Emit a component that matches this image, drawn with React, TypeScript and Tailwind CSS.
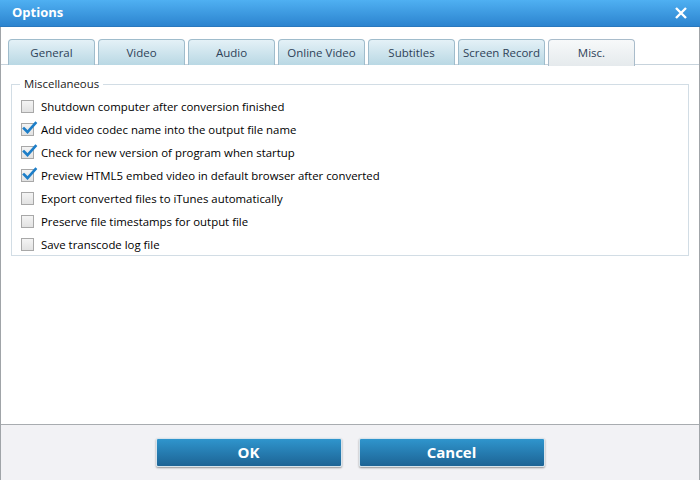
import React from "react";

const tabs = ["General", "Video", "Audio", "Online Video", "Subtitles", "Screen Record", "Misc."];
const items: [string, boolean][] = [
  ["Shutdown computer after conversion finished", false],
  ["Add video codec name into the output file name", true],
  ["Check for new version of program when startup", true],
  ["Preview HTML5 embed video in default browser after converted", true],
  ["Export converted files to iTunes automatically", false],
  ["Preserve file timestamps for output file", false],
  ["Save transcode log file", false],
];

function Box({ checked }: { checked: boolean }) {
  return (
    <div className="relative w-[13px] h-[13px] border border-[#a8a8a8] bg-gradient-to-b from-[#f4f4f4] to-[#e2e2e2] shrink-0">
      {checked && (
        <svg className="absolute left-[0px] top-[-3px]" width="16" height="14" viewBox="0 0 16 14">
          <path d="M2 7.5 L5.5 11 L13.5 2" fill="none" stroke="#1d7ec8" strokeWidth="2.6" strokeLinecap="square" />
        </svg>
      )}
    </div>
  );
}

export default function App() {
  return (
    <div className="w-[700px] h-[480px] flex flex-col bg-white overflow-hidden" style={{ fontFamily: '"Open Sans", "Noto Sans", sans-serif' }}>
      <div className="h-[27px] shrink-0 bg-gradient-to-b from-[#4fb0f2] to-[#2c84cf] flex items-center justify-between pl-[12px] pr-[12px] border-b border-[#2a78bd]">
        <span className="text-white font-bold text-[13px]">Options</span>
        <svg width="14" height="14" viewBox="0 0 14 14">
          <path d="M2 2 L12 12 M12 2 L2 12" stroke="white" strokeWidth="2.4" />
        </svg>
      </div>
      <div className="flex-1 flex flex-col border-x border-[#a0a4a8]">
        <div className="flex gap-[3px] pl-[7px] pt-[12px] border-b border-[#c7d3dc] h-[38px]">
          {tabs.map((t, i) => (
            <div
              key={t}
              className={
                "w-[87px] h-[26px] rounded-t-[4px] border border-b-0 flex items-center justify-center text-[11.5px] " +
                (i === 6
                  ? "border-[#a9bccb] bg-gradient-to-b from-[#f7f9fa] to-[#e5eaed] text-[#2e4258] h-[27px]"
                  : "border-[#9fbccc] bg-gradient-to-b from-[#e4f1f7] to-[#b9d8e4] text-[#2e4258]")
              }
            >
              {t}
            </div>
          ))}
        </div>
        <div className="relative mx-[10px] mt-[19px] border border-[#d2dde5] h-[172px] pt-[10px] pl-[9px]">
          <div className="absolute left-[8px] top-[-9px] bg-white px-[4px] text-[11.4px] text-[#1a1a1a] leading-[16px]">Miscellaneous</div>
          <div className="flex flex-col">
            {items.map(([t, c]) => (
              <div key={t} className="h-[23px] flex items-center gap-[7px] text-[11.4px] text-black">
                <Box checked={c} />
                <span>{t}</span>
              </div>
            ))}
          </div>
        </div>
        <div className="flex-1" />
        <div className="h-[56px] bg-[#f2f2f5] border-t border-[#a8acb0] flex items-center justify-center gap-[17px]">
          {["OK", "Cancel"].map((b) => (
            <div key={b} className="w-[186px] h-[29px] rounded-[2px] bg-gradient-to-b from-[#2f95cd] to-[#1d6495] shadow-[0_1px_2px_rgba(0,0,0,0.4)] border border-[#d8e4ec] flex items-center justify-center text-white font-bold text-[15px]">
              {b}
            </div>
          ))}
        </div>
      </div>
    </div>
  );
}
